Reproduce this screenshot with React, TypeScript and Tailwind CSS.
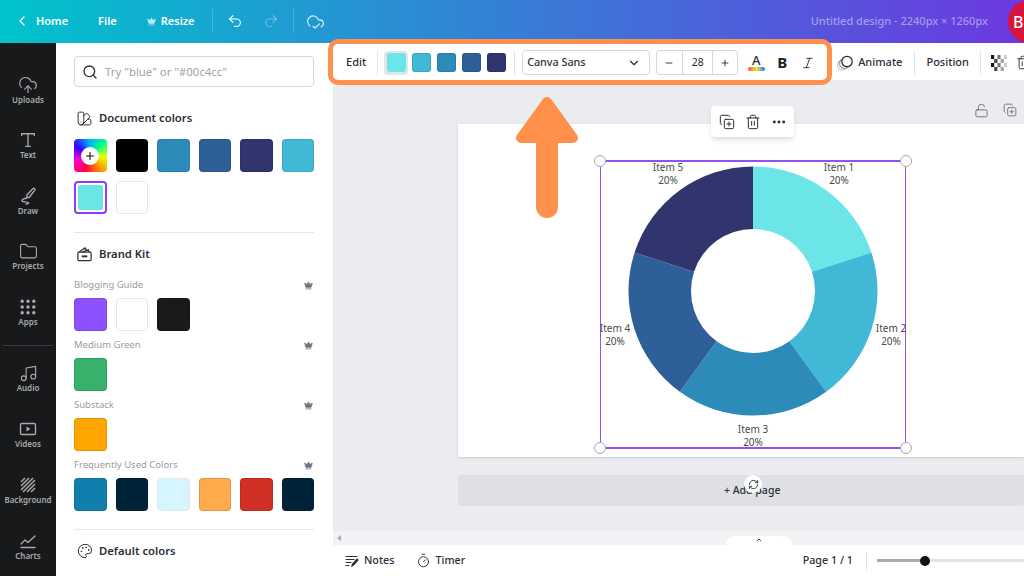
import React from "react";
import {
  ChevronLeft,
  ChevronDown,
  ChevronUp,
  Crown,
  Undo2,
  Redo2,
  CloudCheck,
  CloudUpload,
  Folder,
  Grip,
  Music,
  Search,
  Plus,
  Minus,
  SwatchBook,
  Palette,
  CopyPlus,
  Trash2,
  Ellipsis,
  LockOpen,
  RefreshCw,
  Timer,
  Italic,
} from "lucide-react";

const FONT = "font-['Noto_Sans','Open_Sans',sans-serif]";

const TypeIcon = () => (
  <svg width="18" height="18" viewBox="0 0 20 20" fill="none" stroke="currentColor" strokeWidth="1.5" strokeLinecap="round">
    <path d="M3 5V3h14v2M10 3v14M7.5 17h5" />
  </svg>
);

const DrawIcon = () => (
  <svg width="20" height="20" viewBox="0 0 20 20" fill="none" stroke="currentColor" strokeWidth="1.4" strokeLinecap="round" strokeLinejoin="round">
    <path d="M9 9l6-6.5c1-.9 2.6.4 1.8 1.6L11.5 11c-1 1.2-3.4.3-2.5-2z" />
    <path d="M9 12c-3 .5-5.5 1.5-5 3s6 .3 6.5 1.8c.2.8-1 1.2-2.5 1.2" />
  </svg>
);

const VideoIcon = () => (
  <svg width="20" height="20" viewBox="0 0 20 20" fill="none" stroke="currentColor" strokeWidth="1.4">
    <rect x="2.5" y="4.5" width="15" height="11" rx="1.5" />
    <path d="M8.5 7.5l4 2.5-4 2.5z" fill="currentColor" stroke="none" />
  </svg>
);

const HatchIcon = () => (
  <svg width="20" height="20" viewBox="0 0 20 20" fill="none" stroke="currentColor" strokeWidth="1.5">
    <path d="M3 7l4-4M3 11l8-8M3 15l12-12M5 17L17 5M9 17l8-8M13 17l4-4" />
  </svg>
);

const ChartIcon = () => (
  <svg width="20" height="20" viewBox="0 0 20 20" fill="none" stroke="currentColor" strokeWidth="1.3" strokeLinecap="round" strokeLinejoin="round">
    <path d="M3 13l4-4 3 2.5L17 5M3 16.5h14" />
  </svg>
);

const BrandIcon = () => (
  <svg width="18" height="18" viewBox="0 0 18 18" fill="none" stroke="#2b2f36" strokeWidth="1.3" strokeLinejoin="round">
    <rect x="2" y="7" width="14" height="9" rx="1.2" />
    <path d="M3.5 7l6-4.5 1.5 2-2 .6M7 7l6-2.5.8 2.5" />
    <path d="M6 11.5h6" strokeWidth="2" />
  </svg>
);

const NotesIcon = () => (
  <svg width="14" height="14" viewBox="0 0 14 14" fill="none" stroke="#2b2f36" strokeWidth="1.2" strokeLinecap="round">
    <path d="M1 2.5h11M1 5.5h8M1 8.5h5M1 11.5h3" />
    <path d="M7 12l.5-2 4.5-5 1 1-4.5 5z" fill="#2b2f36" />
  </svg>
);

const ToolbarAnimateIcon = () => (
  <svg width="18" height="18" viewBox="0 0 18 18" fill="none">
    <circle cx="6.5" cy="11" r="5" stroke="#c6c8cc" strokeWidth="1.2" />
    <circle cx="8.5" cy="9.5" r="5" stroke="#9a9da3" strokeWidth="1.2" />
    <circle cx="11" cy="7.5" r="5.2" fill="white" stroke="#2b2f36" strokeWidth="1.3" />
  </svg>
);

// transparency icon, squares fade out to the right
const TransparencyIcon = () => (
  <svg width="16" height="16" viewBox="0 0 16 16" className="shrink-0">
    {[0, 1, 2, 3].flatMap((row) =>
      [0, 1, 2, 3, 4].map((col) =>
        (row + col) % 2 === 0 ? (
          <rect key={`${row}-${col}`} x={col * 3.2} y={row * 4} width="3.2" height="4" fill="#1a1a1a" opacity={1 - col * 0.2} />
        ) : null,
      ),
    )}
  </svg>
);

const navTop = [
  { label: "Uploads", icon: <CloudUpload size={20} strokeWidth={1.4} /> },
  { label: "Text", icon: <span className="h-[20px] flex items-center"><TypeIcon /></span> },
  { label: "Draw", icon: <DrawIcon /> },
  { label: "Projects", icon: <Folder size={19} strokeWidth={1.4} /> },
  { label: "Apps", icon: <Grip size={20} strokeWidth={2.2} /> },
];

const navBottom = [
  { label: "Audio", icon: <Music size={19} strokeWidth={1.4} /> },
  { label: "Videos", icon: <VideoIcon /> },
  { label: "Background", icon: <HatchIcon /> },
  { label: "Charts", icon: <ChartIcon /> },
];

const NavItem = ({ label, icon }: { label: string; icon: React.ReactNode }) => (
  <div className="h-[55.6px] flex flex-col items-center justify-center text-[#a9aaad]">
    {icon}
    <span className="text-[8px] font-semibold leading-[10px]">{label}</span>
  </div>
);

const Swatch = ({ color, border }: { color: string; border?: boolean }) => (
  <div
    className={`h-[33px] rounded-[4px] border ${border ? "border-[#e6e7ea]" : "border-black/10"}`}
    style={{ backgroundColor: color }}
  />
);

const SwatchGrid = ({ children }: { children: React.ReactNode }) => (
  <div className="grid grid-cols-6 gap-[9px]">{children}</div>
);

const BrandRow = ({ name }: { name: string }) => (
  <div className="h-[14px] flex items-center justify-between mb-[6px] mt-[7px] pr-[1px]">
    <span className="text-[9.5px] text-[#9a9ca3]">{name}</span>
    <Crown size={9} className="text-[#6f7278] fill-[#6f7278]" />
  </div>
);

const SectionTitle = ({ icon, title }: { icon: React.ReactNode; title: string }) => (
  <div className="flex items-center gap-[6px] h-[18px] pl-[2px]">
    <span className="w-[17px] flex justify-center">{icon}</span>
    <span className="text-[11.25px] font-semibold text-[#2b2f36]">{title}</span>
  </div>
);

const ColorPanel = () => (
  <aside className="w-[277px] bg-white pl-[18px] pr-[19px] pt-[13px] overflow-hidden">
    <div className="h-[31px] rounded-[4px] border border-[#d5d7db] flex items-center px-[7px] gap-[7px]">
      <Search size={16} className="text-[#2b2f36]" />
      <span className="text-[11.4px] text-[#a0a2a8]">Try "blue" or "#00c4cc"</span>
    </div>
    <div className="mt-[22px] mb-[12px]">
      <SectionTitle icon={<SwatchBook size={17} strokeWidth={1.4} className="text-[#2b2f36]" />} title="Document colors" />
    </div>
    <SwatchGrid>
      <div className="h-[33px] rounded-[4px] flex items-center justify-center bg-[conic-gradient(from_200deg,#ff0044,#ff00cc,#3300ff,#00b0ff,#00ff88,#eeff00,#ff8800,#ff0044)]">
        <span className="w-[18px] h-[18px] rounded-full bg-white flex items-center justify-center">
          <Plus size={12} strokeWidth={2.2} className="text-[#111]" />
        </span>
      </div>
      <Swatch color="#000000" />
      <Swatch color="#2d8bba" />
      <Swatch color="#2f5f98" />
      <Swatch color="#31356e" />
      <Swatch color="#41b8d5" />
      <div className="h-[33px] rounded-[4px] border-2 border-[#8b3dff] p-[2px]">
        <div className="w-full h-full rounded-[2px] bg-[#6ce5e8]" />
      </div>
      <Swatch color="#ffffff" border />
    </SwatchGrid>
    <div className="h-px bg-[#e6e7ea] mt-[18px] mb-[12px]" />
    <SectionTitle icon={<BrandIcon />} title="Brand Kit" />
    <div className="mt-[15px]">
      <BrandRow name="Blogging Guide" />
      <SwatchGrid>
        <Swatch color="#8c52ff" />
        <Swatch color="#ffffff" border />
        <Swatch color="#1a1a1a" />
      </SwatchGrid>
      <BrandRow name="Medium Green" />
      <SwatchGrid>
        <Swatch color="#38b16d" />
      </SwatchGrid>
      <BrandRow name="Substack" />
      <SwatchGrid>
        <Swatch color="#ffa500" />
      </SwatchGrid>
      <BrandRow name="Frequently Used Colors" />
      <SwatchGrid>
        <Swatch color="#117fad" />
        <Swatch color="#012339" />
        <Swatch color="#d6f5ff" border />
        <Swatch color="#ffaa4c" />
        <Swatch color="#d13124" />
        <Swatch color="#012339" />
      </SwatchGrid>
    </div>
    <div className="h-px bg-[#e6e7ea] mt-[18px] mb-[12px]" />
    <SectionTitle icon={<Palette size={16} strokeWidth={1.5} className="text-[#2b2f36]" />} title="Default colors" />
  </aside>
);

const TopBar = () => (
  <header className="h-[43px] shrink-0 flex items-center bg-[linear-gradient(90deg,#00c4cc,#6c38e0)] text-white relative pb-[1px]">
    <ChevronLeft size={16} className="ml-[14px]" />
    <span className="ml-[6px] text-[11px] font-semibold">Home</span>
    <span className="ml-[30px] text-[11px] font-semibold">File</span>
    <Crown size={9} className="ml-[30px] fill-white/70 text-white/70" />
    <span className="ml-[5px] text-[11px] font-semibold">Resize</span>
    <div className="ml-[17px] w-px h-[24px] bg-white/20" />
    <Undo2 size={16} strokeWidth={1.6} className="ml-[14px]" />
    <Redo2 size={16} strokeWidth={1.6} className="ml-[20px] text-white/35" />
    <div className="ml-[14px] w-px h-[24px] bg-white/20" />
    <CloudCheck size={19} strokeWidth={1.4} className="ml-[12px] text-white/85" />
    <span className="ml-auto mr-[36px] text-[11px] font-medium text-white/45">
      Untitled design - 2240px × 1260px
    </span>
    <div className="absolute left-[1008px] top-0 w-[44px] h-[43px] rounded-full bg-[#d9143c] pl-[5px] flex items-center text-[16px] font-medium">
      B
    </div>
  </header>
);

const ToolbarSep = () => <div className="w-px h-[24px] bg-[#e3e4e7]" />;

const tools = ["#41b8d5", "#2d8bba", "#2f5f98", "#31356e"];

const Toolbar = () => (
  <div className="h-[37px] shrink-0 bg-white flex items-center pt-[2px] text-[#2b2f36] overflow-hidden [&>*]:shrink-0">
    <span className="ml-[13px] text-[11px] font-medium">Edit</span>
    <div className="ml-[11px]"><ToolbarSep /></div>
    <div className="ml-[6px] flex items-center">
      <div className="w-[24px] h-[24px] rounded-[4px] bg-[#e3e5e8] flex items-center justify-center">
        <div className="w-[19px] h-[19px] rounded-[3px] bg-[#6ce5e8]" />
      </div>
      <div className="flex gap-[6px] ml-[4px]">
        {tools.map((c) => (
          <div key={c} className="w-[19px] h-[19px] rounded-[3px] border border-black/10" style={{ backgroundColor: c }} />
        ))}
      </div>
    </div>
    <div className="ml-[8px]"><ToolbarSep /></div>
    <div className="ml-[7px] w-[128px] h-[25px] rounded-[4px] border border-[#d5d7db] flex items-center justify-between pl-[4px] pr-[8px]">
      <span className="text-[10.75px] font-medium">Canva Sans</span>
      <ChevronDown size={14} />
    </div>
    <div className="ml-[6px] w-[82px] h-[25px] rounded-[4px] border border-[#d5d7db] flex items-center">
      <span className="w-[25px] flex justify-center"><Minus size={10} strokeWidth={2.2} /></span>
      <span className="w-[32px] h-full flex items-center justify-center border-x border-[#d5d7db] text-[10.5px]">28</span>
      <span className="w-[24px] flex justify-center"><Plus size={10} strokeWidth={2.2} /></span>
    </div>
    <div className="ml-[9px] w-[18px] flex flex-col items-center">
      <span className="text-[13px] leading-[13px] font-medium">A</span>
      <div className="w-[17px] h-[4px] rounded-full bg-gradient-to-r from-[#ff3b3b] via-[#e8e800] to-[#3355ff]" />
    </div>
    <span className="ml-[12px] text-[15px] leading-[15px] font-bold text-[#1a1d21]">B</span>
    <Italic size={14} strokeWidth={1.6} className="ml-[14px]" />
    <div className="ml-[21px]"><ToolbarAnimateIcon /></div>
    <span className="ml-[4px] text-[11px] font-medium">Animate</span>
    <div className="ml-[12px]"><ToolbarSep /></div>
    <span className="ml-[11px] text-[11px] font-medium">Position</span>
    <div className="ml-[11px]"><ToolbarSep /></div>
    <div className="ml-[10px]"><TransparencyIcon /></div>
    <Trash2 size={15} strokeWidth={1.5} className="ml-[9px]" />
  </div>
);

// donut segments, clockwise from 12 o'clock
const slices = ["#6ce5e8", "#41b8d5", "#2d8bba", "#2f5f98", "#31356e"];

const slicePath = (i: number, R: number, r: number) => {
  const a0 = (i * 72 - 90) * (Math.PI / 180);
  const a1 = ((i + 1) * 72 - 90) * (Math.PI / 180);
  const p = (rad: number, a: number) => `${(rad * Math.cos(a)).toFixed(2)} ${(rad * Math.sin(a)).toFixed(2)}`;
  return `M${p(R, a0)} A${R} ${R} 0 0 1 ${p(R, a1)} L${p(r, a1)} A${r} ${r} 0 0 0 ${p(r, a0)} Z`;
};

const Donut = () => (
  <svg width="252" height="252" viewBox="-126 -126 252 252">
    {slices.map((c, i) => (
      <path key={c} d={slicePath(i, 124.5, 62)} fill={c} />
    ))}
  </svg>
);

const Label = ({ name, className }: { name: string; className: string }) => (
  <div className={`absolute -translate-x-1/2 text-center whitespace-nowrap text-[10px] leading-[13px] text-[#4a4a4a] ${className}`}>
    {name}
    <br />
    20%
  </div>
);

const Handle = ({ className }: { className: string }) => (
  <div className={`absolute w-[12px] h-[12px] rounded-full bg-white border border-[#a8a9ac] ${className}`} />
);

const ChartSelection = () => (
  <div className="absolute left-[142px] top-[36px] w-[306px] h-[289px] border-x border-y-2 border-[#9350f5]">
    <div className="absolute left-[26px] top-[3px]">
      <Donut />
    </div>
    <Label name="Item 1" className="left-[238px] -top-[1px]" />
    <Label name="Item 2" className="left-[290px] top-[160px]" />
    <Label name="Item 3" className="left-[152px] top-[261px]" />
    <Label name="Item 4" className="left-[14px] top-[160px]" />
    <Label name="Item 5" className="left-[67px] -top-[1px]" />
    <Handle className="-left-[7px] -top-[7px]" />
    <Handle className="-right-[7px] -top-[7px]" />
    <Handle className="-left-[7px] -bottom-[7px]" />
    <Handle className="-right-[7px] -bottom-[7px]" />
  </div>
);

const Canvas = () => (
  <div className="flex-1 bg-[#ebecf0] pl-[125px] pt-[44px] relative overflow-hidden">
    <div className="absolute right-[7px] top-[23px] flex gap-[14px] text-[#6c6f75]">
      <LockOpen size={15} strokeWidth={1.5} />
      <CopyPlus size={14} strokeWidth={1.5} />
    </div>
    <div className="w-[566px] h-[333px] bg-white relative shadow-sm">
      <div className="absolute left-[253px] -top-[18px] w-[83px] h-[31px] rounded-[4px] bg-white shadow-md flex items-center justify-center gap-[10px] text-[#2b2f36]">
        <CopyPlus size={16} strokeWidth={1.5} />
        <Trash2 size={16} strokeWidth={1.5} />
        <Ellipsis size={16} strokeWidth={2.4} />
      </div>
      <ChartSelection />
    </div>
    <div className="w-[566px] h-[31px] mt-[18px] rounded-[3px] bg-[#dfe0e4] pl-[266px] flex items-center text-[10.5px] font-medium text-[#2b2f36]">
      + Add page
    </div>
    <div className="absolute left-[411px] top-[395px] w-[18px] h-[18px] rounded-full bg-white flex items-center justify-center">
      <RefreshCw size={11} className="text-[#2b2f36]" />
    </div>
  </div>
);

const ScrollStrip = () => (
  <div className="h-[14px] shrink-0 bg-[#f1f2f4] relative">
    <span className="absolute left-[4px] top-[4px] w-0 h-0 border-y-[3px] border-y-transparent border-r-[4px] border-r-[#a8aaae]" />
    <div className="absolute left-[393px] top-[5px] w-[66px] h-[9px] bg-white rounded-t-[12px] flex justify-center">
      <ChevronUp size={8} strokeWidth={2.6} className="text-[#2b2f36]" />
    </div>
  </div>
);

const Footer = () => (
  <footer className="h-[31px] shrink-0 bg-white flex items-center text-[#2b2f36] overflow-hidden">
    <div className="ml-[12px]"><NotesIcon /></div>
    <span className="ml-[5px] text-[10.75px] font-medium">Notes</span>
    <Timer size={15} strokeWidth={1.5} className="ml-[22px]" />
    <span className="ml-[4px] text-[10.75px] font-medium">Timer</span>
    <span className="ml-auto text-[10.75px] font-medium">Page 1 / 1</span>
    <div className="ml-[13px] w-px h-[18px] bg-[#e3e4e7]" />
    <div className="ml-[10px] w-[147px] h-[3px] shrink-0 bg-[#e3e4e7] relative">
      <div className="w-[48px] h-full bg-[#a8aaae]" />
      <div className="absolute left-[43px] -top-[3.5px] w-[10px] h-[10px] rounded-full bg-[#0e1318]" />
    </div>
  </footer>
);

const OrangeHighlight = () => (
  <>
    <div className="absolute left-[328px] top-[39px] w-[504px] h-[46px] rounded-[10px] border-[5px] border-[#ff914d] pointer-events-none" />
    <svg className="absolute left-[514px] top-[96px]" width="68" height="126" viewBox="0 0 68 126">
      <path d="M33 6L7 42h52z" fill="#ff914d" stroke="#ff914d" strokeWidth="10" strokeLinejoin="round" />
      <path d="M33 44v67" stroke="#ff914d" strokeWidth="22" strokeLinecap="round" />
    </svg>
  </>
);

export default function App() {
  return (
    <div className={`w-[1024px] h-[576px] relative flex flex-col overflow-hidden bg-white ${FONT}`}>
      <TopBar />
      <div className="flex flex-1 min-h-0">
        <nav className="w-[56px] shrink-0 bg-[#18191b] pt-[19px]">
          {navTop.map((n) => (
            <NavItem key={n.label} {...n} />
          ))}
          <div className="h-px bg-[#3a3b3e] mx-[3px] mt-[5px] mb-[5px]" />
          {navBottom.map((n) => (
            <NavItem key={n.label} {...n} />
          ))}
        </nav>
        <ColorPanel />
        <main className="w-[691px] flex flex-col min-h-0">
          <Toolbar />
          <Canvas />
          <ScrollStrip />
          <Footer />
        </main>
      </div>
      <OrangeHighlight />
    </div>
  );
}
